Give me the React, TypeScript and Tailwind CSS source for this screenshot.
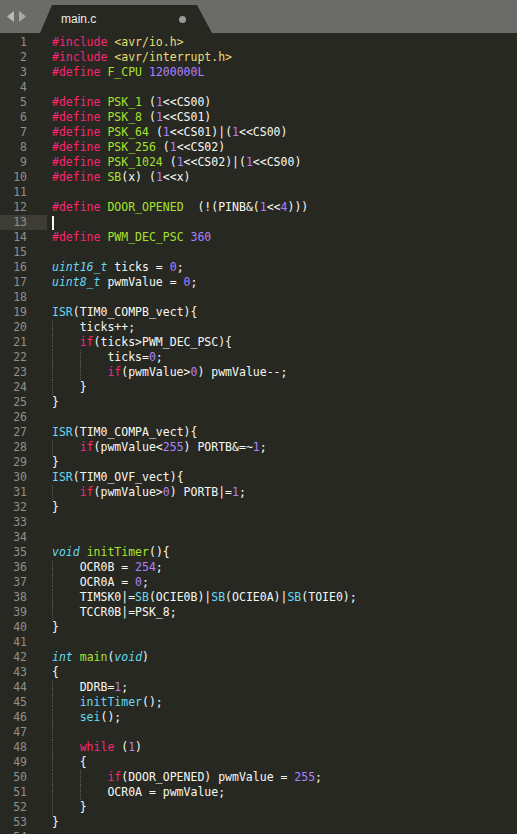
import React from 'react';

type Tok = [string, string?];

// colour keys: p pink, g green, v purple, c cyan, i cyan italic, y yellow
const tone: Record<string, string> = {
  p: 'text-[#f92672]',
  g: 'text-[#a6e22e]',
  v: 'text-[#ae81ff]',
  c: 'text-[#66d9ef]',
  i: 'text-[#66d9ef] italic',
  y: 'text-[#e6db74]',
};

const def = (name: string, rest: Tok[]): Tok[] => [['#define', 'p'], [' '], [name, 'g'], ...rest];

const lines: Tok[][] = [
  [['#include', 'p'], [' '], ['<avr/io.h>', 'y']],
  [['#include', 'p'], [' '], ['<avr/interrupt.h>', 'y']],
  def('F_CPU', [[' '], ['1200000L', 'v']]),
  [],
  def('PSK_1', [[' ('], ['1', 'v'], ['<<CS00)']]),
  def('PSK_8', [[' ('], ['1', 'v'], ['<<CS01)']]),
  def('PSK_64', [[' ('], ['1', 'v'], ['<<CS01)|('], ['1', 'v'], ['<<CS00)']]),
  def('PSK_256', [[' ('], ['1', 'v'], ['<<CS02)']]),
  def('PSK_1024', [[' ('], ['1', 'v'], ['<<CS02)|('], ['1', 'v'], ['<<CS00)']]),
  def('SB', [['(x) ('], ['1', 'v'], ['<<x)']]),
  [],
  def('DOOR_OPENED', [['  (!(PINB&('], ['1', 'v'], ['<<'], ['4', 'v'], [')))']]),
  [],
  def('PWM_DEC_PSC', [[' '], ['360', 'v']]),
  [],
  [['uint16_t', 'i'], [' ticks = '], ['0', 'v'], [';']],
  [['uint8_t', 'i'], [' pwmValue = '], ['0', 'v'], [';']],
  [],
  [['ISR', 'c'], ['(TIM0_COMPB_vect){']],
  [['    ticks++;']],
  [['    '], ['if', 'p'], ['(ticks>PWM_DEC_PSC){']],
  [['        ticks='], ['0', 'v'], [';']],
  [['        '], ['if', 'p'], ['(pwmValue>'], ['0', 'v'], [') pwmValue--;']],
  [['    }']],
  [['}']],
  [],
  [['ISR', 'c'], ['(TIM0_COMPA_vect){']],
  [['    '], ['if', 'p'], ['(pwmValue<'], ['255', 'v'], [') PORTB&=~'], ['1', 'v'], [';']],
  [['}']],
  [['ISR', 'c'], ['(TIM0_OVF_vect){']],
  [['    '], ['if', 'p'], ['(pwmValue>'], ['0', 'v'], [') PORTB|='], ['1', 'v'], [';']],
  [['}']],
  [],
  [],
  [['void', 'i'], [' '], ['initTimer', 'g'], ['(){']],
  [['    OCR0B = '], ['254', 'v'], [';']],
  [['    OCR0A = '], ['0', 'v'], [';']],
  [['    TIMSK0|='], ['SB', 'c'], ['(OCIE0B)|'], ['SB', 'c'], ['(OCIE0A)|'], ['SB', 'c'], ['(TOIE0);']],
  [['    TCCR0B|=PSK_8;']],
  [['}']],
  [],
  [['int', 'i'], [' '], ['main', 'g'], ['('], ['void', 'i'], [')']],
  [['{']],
  [['    DDRB='], ['1', 'v'], [';']],
  [['    '], ['initTimer', 'c'], ['();']],
  [['    '], ['sei', 'c'], ['();']],
  [['    ']],
  [['    '], ['while', 'p'], [' ('], ['1', 'v'], [')']],
  [['    {']],
  [['        '], ['if', 'p'], ['(DOOR_OPENED) pwmValue = '], ['255', 'v'], [';']],
  [['        OCR0A = pwmValue;']],
  [['    }']],
  [['}']],
  [],
];

function CodeLine({ toks }: { toks: Tok[] }) {
  const first = toks[0]?.[0] ?? '';
  const lead = first.length - first.trimStart().length;
  const guides = Math.floor(lead / 4);
  const rest: Tok[] = toks.length ? [[first.slice(guides * 4), toks[0][1]], ...toks.slice(1)] : [];
  return (
    <div className="h-[15px] leading-[15px] whitespace-pre flex">
      {Array.from({ length: guides }).map((_, k) => (
        <span key={k} className="inline-block w-[4ch] h-full border-l border-dotted border-[#5e5e58]" />
      ))}
      {rest.map(([t, k], j) => (
        <span key={j} className={k ? tone[k] : ''}>
          {t}
        </span>
      ))}
    </div>
  );
}

export default function App() {
  return (
    <div className="w-[517px] h-[834px] overflow-hidden bg-[#272822] text-[#f8f8f2]">
      {/* tab bar */}
      <div className="h-[33px] bg-[#6b6c67] flex items-end">
        <div className="w-[40px] h-full flex items-center gap-[5px] pl-[7px]">
          <svg width="7" height="11" viewBox="0 0 7 11">
            <path d="M7 0 L0 5.5 L7 11 Z" fill="#b9b9b5" />
          </svg>
          <svg width="7" height="11" viewBox="0 0 7 11">
            <path d="M0 0 L7 5.5 L0 11 Z" fill="#a9a9a5" />
          </svg>
        </div>
        <div className="w-[172px] h-[28px] bg-[#272822] [clip-path:polygon(0_100%,12px_0,157px_0,100%_100%)] flex items-center">
          <span className="ml-[21px] text-[12px] text-[#ececea] font-['Liberation_Sans',sans-serif]">main.c</span>
          <span className="ml-auto mr-[26px] w-[7px] h-[7px] rounded-full bg-[#9a9a96]" />
        </div>
      </div>

      {/* editor */}
      <div className="flex pt-[2px] font-['DejaVu_Sans_Mono',monospace] text-[11.5px]">
        <div className="w-[47px] text-[#8f908a]">
          {lines.map((_, n) => (
            <div
              key={n}
              className={`h-[15px] leading-[15px] text-right pr-[20px] ${n === 12 ? 'bg-[#3e3d35]' : ''}`}
            >
              {n + 1}
            </div>
          ))}
        </div>
        <div className="pl-[5px] flex-1 relative">
          {lines.map((toks, n) => (
            <div key={n} className="relative">
              {n === 12 && <span className="absolute left-0 top-[1px] w-[2px] h-[14px] bg-[#f8f8f0]" />}
              <CodeLine toks={toks} />
            </div>
          ))}
        </div>
      </div>
    </div>
  );
}
